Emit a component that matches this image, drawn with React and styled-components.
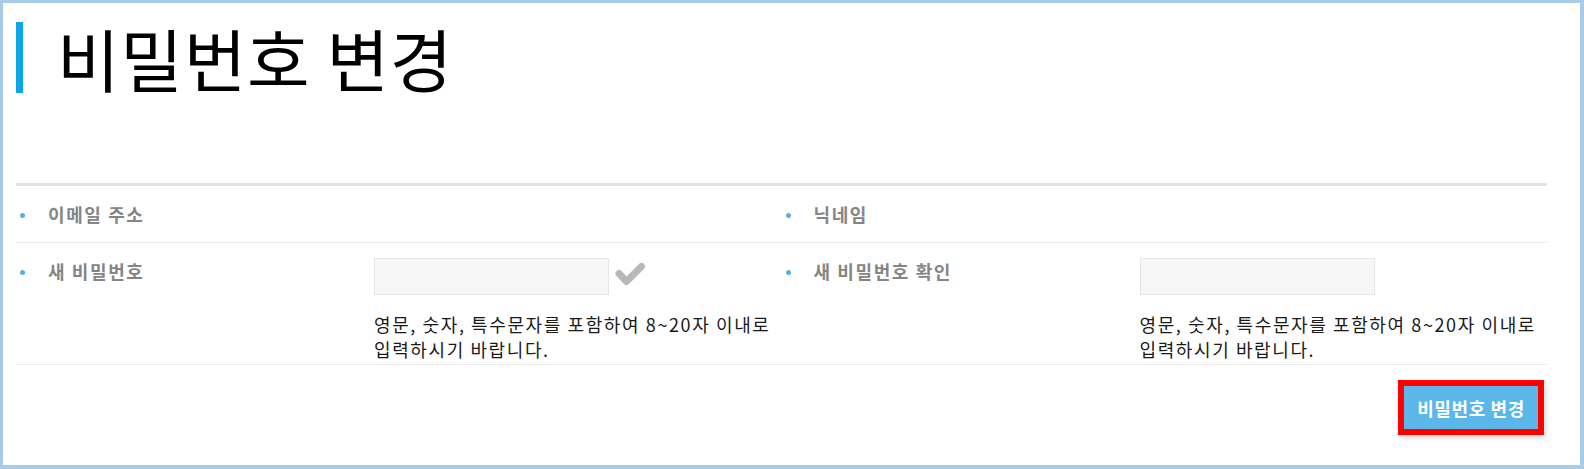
import React from 'react';
import styled, { createGlobalStyle } from 'styled-components';

const GlobalStyle = createGlobalStyle`
    html, body {
        margin: 0;
        padding: 0;
        background: #ffffff;
    }
    body {
        font-family: 'Noto Sans CJK KR', 'Noto Sans', sans-serif;
    }
`;

const fields = [
    [
        { label: '이메일 주소' },
        { label: '닉네임' },
    ],
    [
        { label: '새 비밀번호', input: true, check: true, help: true },
        { label: '새 비밀번호 확인', input: true, help: true },
    ],
];

function CheckIcon () {
    return (
        <CheckSvg viewBox="0 0 32 26" width="32" height="26">
            <path d="M5 12.5 L12.5 20.5 L27.5 5.5" fill="none" stroke="#b8b8b8" strokeWidth="7" strokeLinecap="round" strokeLinejoin="round" />
        </CheckSvg>
    );
}

function App () {
    return (
        <Frame>
            <GlobalStyle />
            <TitleBar>
                <Title>비밀번호 변경</Title>
            </TitleBar>
            <Form>
                {fields.map((row, i) => (
                    <Row key={i}>
                        {row.map(f => (
                            <Cell key={f.label}>
                                <Label tall={f.input}>
                                    <Bullet />
                                    {f.label}
                                </Label>
                                {f.input && (
                                    <Field>
                                        <InputLine>
                                            <TextInput type="password" />
                                            {f.check && <CheckIcon />}
                                        </InputLine>
                                        {f.help && (
                                            <Help>
                                                영문, 숫자, 특수문자를 포함하여 8~20자 이내로<br />
                                                입력하시기 바랍니다.
                                            </Help>
                                        )}
                                    </Field>
                                )}
                            </Cell>
                        ))}
                    </Row>
                ))}
            </Form>
            <Actions>
                <SubmitButton>비밀번호 변경</SubmitButton>
            </Actions>
        </Frame>
    );
}

const Frame = styled.div`
    box-sizing: border-box;
    width: 1584px;
    height: 469px;
    border: solid #a8cbe8;
    border-width: 3px 4px 4px 3px;
    padding: 19px 33px 0 13px;
`;

const TitleBar = styled.div`
    display: flex;
    align-items: center;
    height: 71px;
    border-left: 7px solid #0ba6e8;
    padding-left: 34px;
`;

const Title = styled.h1`
    margin: 0;
    font-size: 68px;
    font-weight: 400;
    line-height: 71px;
    color: #000000;
    letter-spacing: 0.8px;
`;

const Form = styled.div`
    margin-top: 90px;
    border-top: 3px solid #e4e4e4;
`;

const Row = styled.div`
    display: grid;
    grid-template-columns: 1fr 1fr;
    border-bottom: 1px solid #ebebeb;
    min-height: 56px;
`;

const Cell = styled.div`
    display: grid;
    grid-template-columns: 358px 1fr;
    align-items: start;
`;

const Label = styled.div`
    display: flex;
    align-items: center;
    height: ${p => p.tall ? '36px' : '56px'};
    margin-top: ${p => p.tall ? '10px' : '0'};
    font-size: 18px;
    font-weight: 700;
    color: #858585;
    letter-spacing: 1.6px;
`;

const Bullet = styled.span`
    width: 5px;
    height: 5px;
    border-radius: 50%;
    background: #5aaee2;
    margin: 3px 23px 0 4px;
`;

const Field = styled.div`
    padding-top: 15px;
`;

const InputLine = styled.div`
    display: flex;
    align-items: center;
    gap: 5px;
`;

const TextInput = styled.input`
    box-sizing: border-box;
    width: 235px;
    height: 37px;
    background: #f6f6f6;
    border: 1px solid #e6e6e6;
    outline: none;
    margin: 0;
`;

const CheckSvg = styled.svg`
    display: block;
    margin-top: -6px;
`;

const Help = styled.p`
    margin: 17px 0 2px;
    font-size: 18px;
    line-height: 25px;
    color: #1a1a1a;
    letter-spacing: 1.6px;
`;

const Actions = styled.div`
    display: flex;
    justify-content: flex-end;
    padding: 15px 3px 0 0;
`;

const SubmitButton = styled.button`
    box-sizing: border-box;
    width: 146px;
    height: 55px;
    padding: 0;
    border: 6px solid #ff0000;
    background: #5bb6ea;
    color: #ffffff;
    font-family: 'Noto Sans CJK KR', sans-serif;
    font-size: 18px;
    font-weight: 700;
    letter-spacing: 0.6px;
    cursor: pointer;
    box-shadow: 2px 3px 5px rgba(0, 0, 0, 0.15);
`;

export default App;
